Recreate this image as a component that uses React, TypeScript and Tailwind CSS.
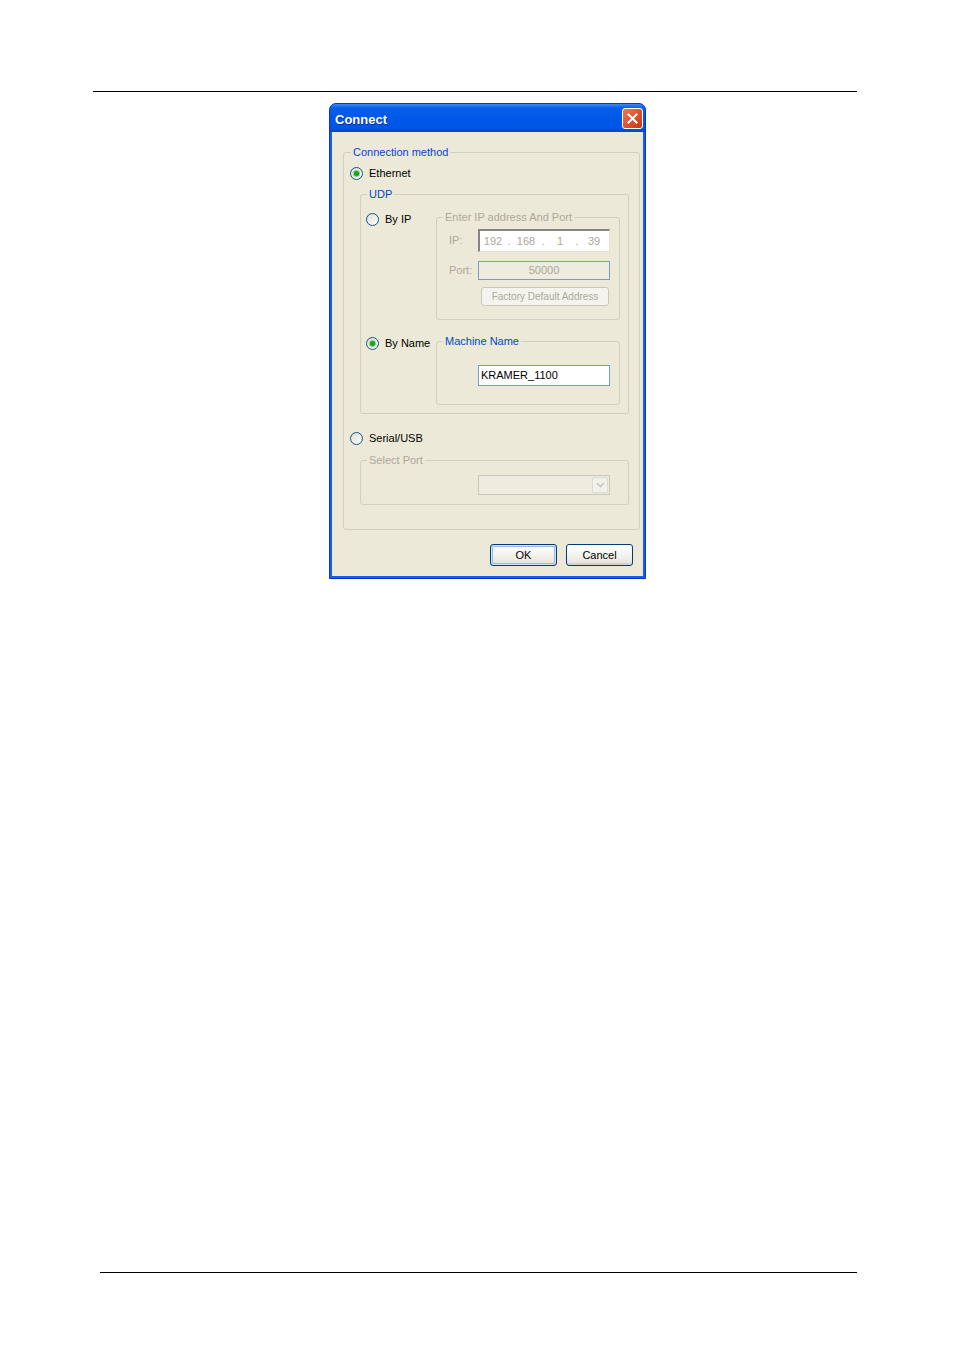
import React from 'react';

const disabled = 'text-[#ACA899]';

function Radio({ checked = false }: { checked?: boolean }) {
  return (
    <div className="w-[13px] h-[13px] shrink-0 rounded-full border border-[#1C5180] bg-gradient-to-br from-[#DCDCD7] to-white flex items-center justify-center">
      {checked && <div className="w-[5px] h-[5px] rounded-full bg-[#21A121] shadow-[0_0_0_1px_#7BD47B]" />}
    </div>
  );
}

function RadioRow({ label, checked }: { label: string; checked?: boolean }) {
  return (
    <div className="flex items-center gap-[6px] h-[13px] leading-[13px] text-black">
      <Radio checked={checked} />
      <span>{label}</span>
    </div>
  );
}

interface GroupProps {
  legend: string;
  muted?: boolean;
  className?: string;
  legendClassName?: string;
  children: React.ReactNode;
}

function Group({ legend, muted = false, className = '', legendClassName = 'ml-[6px]', children }: GroupProps) {
  return (
    <fieldset className={`border border-[#D0D0BF] rounded-[3px] ${className}`}>
      <legend className={`px-[2px] leading-[13px] ${legendClassName} ${muted ? disabled : 'text-[#0046D5]'}`}>
        {legend}
      </legend>
      {children}
    </fieldset>
  );
}

function XpButton({ label, primary = false }: { label: string; primary?: boolean }) {
  return (
    <button
      className={`w-[67px] h-[22px] rounded-[3px] border border-[#003C74] bg-gradient-to-b from-white via-[#F4F3EE] to-[#E3E1D6] text-black leading-[20px] ${
        primary ? 'shadow-[inset_0_0_0_1px_#CEE7FF,inset_0_0_0_2px_#98B8EA]' : 'shadow-[inset_0_-2px_0_#D6D0C5]'
      }`}
    >
      {label}
    </button>
  );
}

function IpBox() {
  return (
    <div className={`w-[132px] h-[23px] bg-white border-t-2 border-l-2 border-t-[#858585] border-l-[#858585] border-r border-b border-r-[#E4E2D8] border-b-[#E4E2D8] flex items-center ${disabled}`}>
      <span className="w-[26px] text-center">192</span>
      <span className="w-[6px] text-center">.</span>
      <span className="w-[28px] text-center">168</span>
      <span className="w-[6px] text-center">.</span>
      <span className="w-[28px] text-center">1</span>
      <span className="w-[6px] text-center">.</span>
      <span className="w-[28px] text-center">39</span>
    </div>
  );
}

export default function App() {
  return (
    <div className="w-[954px] h-[1354px] bg-white text-[11px] font-['Liberation_Sans',Arial,sans-serif] flex flex-col">
      <div className="mt-[91px] ml-[93px] w-[764px] h-px bg-black" />

      <div className="mt-[11px] ml-[329px] w-[317px] rounded-t-[7px] border border-[#0831D9] bg-[#1660E8] flex flex-col overflow-hidden">
        <div className="h-[28px] flex items-center justify-between pl-[5px] pr-[2px] bg-[linear-gradient(to_bottom,#3C8CF7_0%,#0A5DE8_14%,#0058E8_50%,#0055E5_85%,#0047C7_100%)]">
          <span className="pt-[3px] text-white font-bold text-[13px] [text-shadow:1px_1px_0_#0A2E9E]">Connect</span>
          <div className="mt-[1px] w-[21px] h-[21px] rounded-[3px] border border-white bg-gradient-to-br from-[#E9795A] via-[#E0532F] to-[#C13A16] flex items-center justify-center">
            <svg width="11" height="11" viewBox="0 0 11 11">
              <path d="M1.5 1.5 L9.5 9.5 M9.5 1.5 L1.5 9.5" stroke="white" strokeWidth="2" strokeLinecap="square" />
            </svg>
          </div>
        </div>

        <div className="mx-[2px] mb-[2px] bg-[#ECE9D8] pt-[14px] pb-[10px] flex flex-col">
          <Group legend="Connection method" className="ml-[11px] mr-[3px] pb-[24px]" legendClassName="ml-[7px]">
            <div className="mt-[8px] pl-[6px]">
              <RadioRow label="Ethernet" checked />
            </div>

            <Group legend="UDP" className="mt-[8px] ml-[16px] mr-[10px] pb-[8px]">
              <div className="mt-[10px] flex">
                <div className="w-[75px] pl-[5px] pt-[2px]">
                  <RadioRow label="By IP" />
                </div>
                <Group legend="Enter IP address And Port" muted className="w-[184px] pb-[13px]">
                  <div className="mt-[5px] pl-[12px] flex flex-col">
                    <div className="flex items-center">
                      <span className={`w-[29px] ${disabled}`}>IP:</span>
                      <IpBox />
                    </div>
                    <div className="mt-[9px] flex items-center">
                      <span className={`w-[29px] ${disabled}`}>Port:</span>
                      <div className={`w-[132px] h-[19px] border border-[#7F9DB9] bg-[#EEEBDF] flex items-center justify-center ${disabled}`}>
                        50000
                      </div>
                    </div>
                    <div className="mt-[7px] ml-[32px] w-[128px] h-[19px] rounded-[3px] border border-[#C9C7BA] bg-[#F4F3EE] flex items-center justify-center text-[10px] text-[#ACA899]">
                      Factory Default Address
                    </div>
                  </div>
                </Group>
              </div>

              <div className="mt-[15px] flex">
                <div className="w-[75px] pl-[5px] pt-[2px]">
                  <RadioRow label="By Name" checked />
                </div>
                <Group legend="Machine Name" className="w-[184px] pb-[18px]">
                  <div className="mt-[17px] pl-[41px]">
                    <div className="w-[132px] h-[21px] border border-[#7F9DB9] bg-white flex items-center pl-[2px] text-black">
                      KRAMER_1100
                    </div>
                  </div>
                </Group>
              </div>
            </Group>

            <div className="mt-[18px] pl-[6px]">
              <RadioRow label="Serial/USB" />
            </div>

            <Group legend="Select Port" muted className="mt-[9px] ml-[16px] mr-[10px] pb-[9px]">
              <div className="mt-[8px] pl-[117px]">
                <div className="w-[132px] h-[20px] border border-[#C9C7BA] bg-[#EEEBDF] flex items-center justify-end pr-px">
                  <div className="w-[16px] h-[16px] rounded-[2px] border border-[#DDDBD0] bg-[#F2F1EC] flex items-center justify-center">
                    <svg width="9" height="6" viewBox="0 0 9 6">
                      <path d="M1 1 L4.5 4.5 L8 1" fill="none" stroke="#C9C7BA" strokeWidth="1.6" />
                    </svg>
                  </div>
                </div>
              </div>
            </Group>
          </Group>

          <div className="mt-[14px] pr-[10px] flex justify-end gap-[9px]">
            <XpButton label="OK" primary />
            <XpButton label="Cancel" />
          </div>
        </div>
      </div>

      <div className="mt-[693px] ml-[100px] w-[757px] h-px bg-black" />
    </div>
  );
}
